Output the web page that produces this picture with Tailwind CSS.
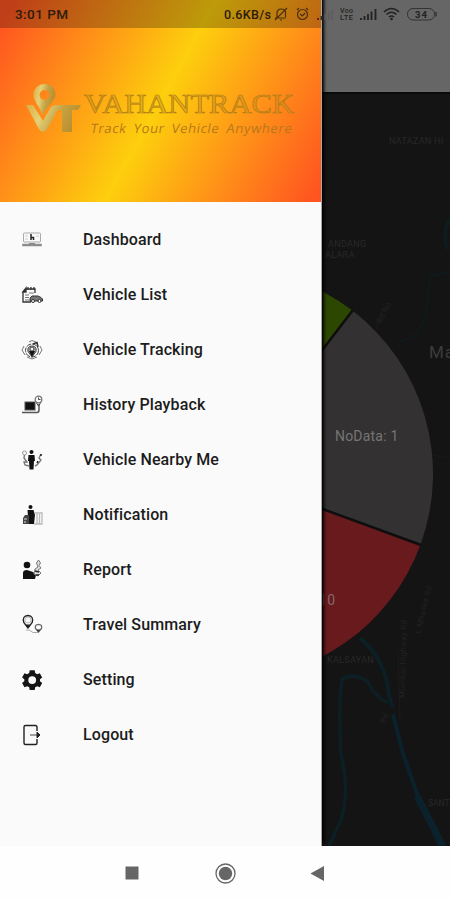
<!DOCTYPE html>
<html lang="en">
<head>
    <meta charset="UTF-8">
    <meta name="viewport" content="width=device-width, initial-scale=1.0">
    <title>VahanTrack</title>
    <script src="https://cdn.jsdelivr.net/npm/@tailwindcss/browser@4"></script>
</head>
<body class="bg-white font-['Roboto',sans-serif]">
    <div class="relative flex flex-col w-[450px] h-[900px] overflow-hidden">
        <!-- Dimmed map screen -->
        <main class="flex flex-col h-[846px] bg-[#141414]">
            <div class="h-[92px] shrink-0 bg-[#666666]"></div>
            <svg class="block w-[450px] h-[754px]" viewBox="0 92 450 754" fill="none">
                <rect y="92" width="450" height="2" fill="#0a0a0a"/>
                <!-- Rivers -->
                <g stroke="#0c1f24">
                    <path d="M450 219Q441 235 448 249" stroke-width="4" stroke="#0e1c1f"/>
                    <path d="M450 272L430 276L426 316Q420 336 400 342" stroke-width="2" stroke="#101a1c"/>
                    <path d="M360 638Q386 660 389 695L393 708" stroke-width="4"/>
                    <path d="M393 714L403 754L418 796L440 846" stroke-width="4" stroke="#0b212b"/>
                    <path d="M417 796L443 846" stroke-width="7" stroke="#0b212b"/>
                    <path d="M388 703Q374 696 368 682Q354 672 342 679Q338 710 341 755Q350 790 341 820L329 846" stroke-width="3.500"/>
                </g>
                <path d="M425 454L450 458M400 720L398 650M384 303L376 330" stroke="#1b1b1b"/>
                <!-- Place labels -->
                <g fill="#282828" font-size="9" letter-spacing=".3">
                    <text x="389" y="144">NATAZAN HI</text>
                    <text x="328" y="247">ANDANG</text>
                    <text x="325" y="258">ALARA</text>
                    <text x="327" y="663">KALSAYAN</text>
                    <text x="428" y="806" font-size="8.500" letter-spacing="0">SANT</text>
                    <g fill="#222">
                        <text x="405" y="698" font-size="8" transform="rotate(-89 405 698)">Mumbai Highway Rd</text>
                        <text x="420" y="634" font-size="8" transform="rotate(-76 420 634)">L Mhaske Rd</text>
                        <text x="384" y="724" font-size="8" transform="rotate(-60 384 724)">Rd</text>
                        <text x="381" y="324" font-size="8" transform="rotate(-62 381 324)">Rd No</text>
                    </g>
                </g>
                <text x="429" y="358" font-size="17" letter-spacing="1" fill="#3c3c3c">Ma</text>
                <!-- Status pie -->
                <path d="M227 474V268A206 206 0 0 1 352.500 310.600Z" fill="#2c4700"/>
                <path d="M227 474L352.500 310.600A206 206 0 0 1 420.500 544.700Z" fill="#333132"/>
                <path d="M227 474L420.500 544.700A206 206 0 0 1 227 680Z" fill="#691a1d"/>
                <path d="M353 310L227 474L421 545" stroke="#0e0e0e" stroke-width="2.500"/>
                <text x="335" y="441" font-size="14" letter-spacing=".2" fill="#757575">NoData: 1</text>
                <text x="319" y="605" font-size="14" letter-spacing=".5" fill="#85696a">10</text>
            </svg>
        </main>

        <!-- Drawer -->
        <aside class="absolute left-0 top-0 flex flex-col w-[322px] h-[846px] bg-[#fafafa] border-r border-[#a8a8a8] shadow-[2px_-3px_3px_#000]">
            <header class="h-[202px] shrink-0 bg-[linear-gradient(119deg,#ff5420_3%,#ff8c19_24%,#fdcf0d_50%,#ff8c19_76%,#ff5420_98%)]">
                <svg class="block w-[321px] h-[202px]" viewBox="0 0 321 202">
                    <defs>
                        <linearGradient id="gold" x1="0" y1="0" x2="1" y2=".25">
                            <stop offset="0" stop-color="#dcae3c"/>
                            <stop offset=".35" stop-color="#e5d078"/>
                            <stop offset=".65" stop-color="#c5a343"/>
                            <stop offset="1" stop-color="#bb8f2d"/>
                        </linearGradient>
                    </defs>
                    <path fill="url(#gold)" fill-rule="evenodd" d="M44.500 84C38 84 33.500 89 33.500 95C33.500 101 40 107 42.500 115C46 107 55.500 101 55.500 94.500C55.500 88 51 84 44.500 84ZM44.500 90A5 5 0 1 1 44.500 100A5 5 0 1 1 44.500 90Z"/>
                    <path fill="url(#gold)" d="M26 105H33L43 121L51 107Q53 105 57 105H81L78 110H72V132H62V110H58L47 129Q43 135 39 129Z"/>
                    <text x="84" y="112.500" font-family="Liberation Serif" font-size="27" textLength="210" lengthAdjust="spacingAndGlyphs" fill="#c9921c" fill-opacity=".45" stroke="#b07c18" stroke-width=".7">VAHANTRACK</text>
                    <text transform="translate(90 133) skewX(-10)" font-family="Open Sans, sans-serif" font-size="13" textLength="201" lengthAdjust="spacing" word-spacing="3" fill="#b5781a">Track Your Vehicle Anywhere</text>
                </svg>
            </header>
            <nav class="flex flex-col pt-[10px] text-[16px] font-medium text-[#1c1c1c]">
                <a class="flex items-center h-[55px] pl-[21px] gap-[40px]">
                    <svg class="w-[22px] h-[22px]" viewBox="0 0 22 22" fill="none">
                        <rect x="2.500" y="4" width="17" height="9" rx="1" stroke="#aaa"/>
                        <path d="M10 5V11M10 8.500H12.500V11" stroke="#222" stroke-width="1.500"/>
                        <path d="M4 7H7M15 7H18M4 10H7" stroke="#ccc"/>
                        <path d="M1 14.500H21V17.500H1Z" fill="#c4c4c4"/><path d="M1.500 16H20.500" stroke="#555"/><path d="M8 14.500H14" stroke="#888"/>
                    </svg>
                    <span class="tracking-[0.12px]">Dashboard</span>
                </a>
                <a class="flex items-center h-[55px] pl-[21px] gap-[40px]">
                    <svg class="w-[22px] h-[22px]" viewBox="0 0 22 22" fill="none" stroke="#333">
                        <path d="M14 9V5H5L2 8V18H10" stroke-width="1.300"/>
                        <path d="M2 8L5 4V8ZM7 3V6M10 3V6M13 3V6" fill="#222" stroke-width="1.300"/>
                        <path d="M4 11H8M4 13.500H8M4 16H8M8 9H13" stroke="#777"/>
                        <path d="M9 16V14L11 12H17L20 13.500L21.500 15V17H9Z" fill="#777"/>
                        <circle cx="12" cy="17" r="1.500" fill="#fff"/><circle cx="18.500" cy="17" r="1.500" fill="#fff"/>
                    </svg>
                    <span class="tracking-[0.12px]">Vehicle List</span>
                </a>
                <a class="flex items-center h-[55px] pl-[21px] gap-[40px]">
                    <svg class="w-[22px] h-[22px]" viewBox="0 0 22 22" fill="none" stroke="#444">
                        <circle cx="11" cy="11.500" r="6.500" stroke-dasharray="5 1"/>
                        <path d="M3 7L1 11L4 16M19 7L21 11L18 16M6 18L11 20L16 18M8 3L11 1.500L15 3" stroke="#777"/>
                        <path d="M11 18L7 12.500Q6 7 11 7Q16 7 15 12.500Z" fill="#aaa"/>
                        <path d="M8 12H14L11 18Z" fill="#111" stroke="none"/>
                        <circle cx="11" cy="10" r="2" fill="#eee"/>
                        <path d="M12 5L16 3.500L17 8" stroke="#333" stroke-width="1.500"/>
                    </svg>
                    <span class="tracking-[0.12px]">Vehicle Tracking</span>
                </a>
                <a class="flex items-center h-[55px] pl-[21px] gap-[40px]">
                    <svg class="w-[22px] h-[22px]" viewBox="0 0 22 22" fill="none">
                        <rect x="4" y="8" width="10" height="8" fill="#111" stroke="#555"/>
                        <path d="M1 18.500H16Q18 18.500 18 16V10" stroke="#555" stroke-width="1.500"/>
                        <circle cx="17.500" cy="5.500" r="3.300" stroke="#777" stroke-width="1.300"/>
                        <path d="M17.500 3.500V5.500H19.500M15.500 9L17.500 12L19.500 9" stroke="#444"/>
                    </svg>
                    <span class="tracking-[0.12px]">History Playback</span>
                </a>
                <a class="flex items-center h-[55px] pl-[21px] gap-[40px]">
                    <svg class="w-[22px] h-[22px]" viewBox="0 0 22 22" fill="none">
                        <circle cx="10.500" cy="3" r="2" fill="#111"/>
                        <path d="M7.500 6H13.500L14 12H13L12.500 20.500H8.500L8 12H7Z" fill="#111"/>
                        <circle cx="3.500" cy="4" r="2" stroke="#999"/>
                        <path d="M3.500 6L3 9L6 13H3L4 16L8 17M20 5L18 9L20 11L16 16L14 17" stroke="#777" stroke-width="1.400"/>
                        <path d="M20 5V7M17 12L16 14" stroke="#222" stroke-width="1.500"/>
                    </svg>
                    <span class="tracking-[0.12px]">Vehicle Nearby Me</span>
                </a>
                <a class="flex items-center h-[55px] pl-[21px] gap-[40px]">
                    <svg class="w-[22px] h-[22px]" viewBox="0 0 22 22" fill="none">
                        <circle cx="9.500" cy="3" r="2" fill="#111"/>
                        <path d="M6.500 6H12.500L14 11L13 20H7V13Z" fill="#111"/>
                        <path d="M2 20V14L4 11H8V20Z" fill="#444"/>
                        <path d="M3 15H6M3 18H5" stroke="#ddd"/>
                        <path d="M14 9H21V20H13M16 10V20M18.500 10V20" stroke="#bbb" stroke-width="1.300"/>
                    </svg>
                    <span class="tracking-[0.12px]">Notification</span>
                </a>
                <a class="flex items-center h-[55px] pl-[21px] gap-[40px]">
                    <svg class="w-[22px] h-[22px]" viewBox="0 0 22 22" fill="none">
                        <circle cx="6" cy="6" r="3.300" fill="#111"/>
                        <path d="M2 20V14Q2 11 6 11L12 13L15 16L14 20Z" fill="#111"/>
                        <path d="M17.500 1L19.500 4L18 6.500L20 9L17 11L20 14L17 17L13 15L14 10L17 8L15.500 4Z" fill="#ddd" stroke="#777"/>
                        <path d="M14 12L18 13M15 16H18" stroke="#222" stroke-width="1.300"/>
                    </svg>
                    <span class="tracking-[0.12px]">Report</span>
                </a>
                <a class="flex items-center h-[55px] pl-[21px] gap-[40px]">
                    <svg class="w-[22px] h-[22px]" viewBox="0 0 22 22" fill="none" stroke="#222">
                        <path d="M7 14L2.800 8.500Q0.800 2 7 1.500Q13 2 11.200 8.500Z" stroke-width="1.300"/>
                        <path d="M5 11H9L7 14Z" fill="#222"/>
                        <circle cx="7" cy="6" r="3" stroke="#bbb"/>
                        <path d="M17.500 18L14.500 14.500Q13.500 10.500 17.500 10.300Q21.500 10.500 20.500 14.500Z" stroke="#666" stroke-width="1.300"/>
                        <path d="M15.500 15.500H19.500L17.500 18Z" fill="#333" stroke="none"/>
                        <path d="M5 16H8L12 18.500H17" stroke="#aaa"/>
                    </svg>
                    <span class="tracking-[0.12px]">Travel Summary</span>
                </a>
                <a class="flex items-center h-[55px] pl-[21px] gap-[40px]">
                    <svg class="w-[22px] h-[22px]" viewBox="0 0 22 22" fill="#151515">
                        <path fill-rule="evenodd" d="M8.700 1.200H13.700L14.200 4L16.200 5.200L18.800 4.200L21.200 8.500L19 10.200V12.200L21.200 14L18.800 18.200L16.200 17.200L14.200 18.300L13.700 21H8.700L8.200 18.300L6.200 17.200L3.500 18.200L1.100 14L3.300 12.200V10.200L1.100 8.500L3.500 4.200L6.200 5.200L8.200 4ZM11.200 7.200A3.900 3.900 0 1 0 11.200 15A3.900 3.900 0 1 0 11.200 7.200Z"/>
                    </svg>
                    <span class="tracking-[0.12px]">Setting</span>
                </a>
                <a class="flex items-center h-[55px] pl-[21px] gap-[40px]">
                    <svg class="w-[22px] h-[22px]" viewBox="0 0 22 22" fill="none" stroke="#222" stroke-width="1.400">
                        <path d="M16 7V3Q16 1.500 14.500 1.500H4.500Q3 1.500 3 3V19Q3 20.500 4.500 20.500H14.500Q16 20.500 16 19V15"/>
                        <path d="M9 11H17" stroke="#777"/>
                        <path d="M16 8L19 11L16 14Z" fill="#222" stroke-width="1"/>
                    </svg>
                    <span class="tracking-[0.12px]">Logout</span>
                </a>
            </nav>
        </aside>

        <!-- Status bar -->
        <div class="absolute left-0 top-0 flex w-[450px] h-[28px]">
            <div class="w-[321px] h-[28px] bg-black/25"></div>
            <svg class="absolute left-0 top-0 w-[450px] h-[28px]" viewBox="0 0 450 28" fill="none">
                <g fill="#2d1b0c" font-weight="500">
                    <text x="15" y="19" font-size="13.500" textLength="53">3:01 PM</text>
                    <text x="224" y="18.500" font-size="12.500" textLength="47">0.6KB/s</text>
                </g>
                <!-- Mute and alarm -->
                <g stroke="#4a3010" stroke-width="1.200">
                    <path d="M275 18H286M277 18V12Q278 9 281 9Q285 9 285.500 12V17M275 20L287 8M280 20H282"/>
                    <circle cx="302.500" cy="14.500" r="5"/>
                    <path d="M297 10L299 8M308 10L306 8M300 14L302.500 16L305 13"/>
                </g>
                <path d="M317 20V18H319V20Z" fill="#6b200a"/>
                <path d="M320.500 20V16H322.500V20Z" fill="#333"/>
                <path d="M325 20V14M329 20V12M332 20V10" stroke="#5c5c5c" stroke-width="1.500"/>
                <g fill="#252525" font-weight="500">
                    <text x="340" y="12.500" font-size="7" textLength="13">Voo</text>
                    <text x="340" y="20" font-size="7.500" textLength="13">LTE</text>
                </g>
                <path d="M361 20V18M364.500 20V16M368 20V14M371.500 20V11.500M375.500 20V9" stroke="#222" stroke-width="1.800"/>
                <path d="M384 12Q391.500 5 399 12M386.500 14.500Q391.500 10 396.500 14.500M389 17Q391.500 15 394 17" stroke="#222" stroke-width="1.600"/>
                <circle cx="391.500" cy="19" r="1.300" fill="#222"/>
                <rect x="407.500" y="8.500" width="27" height="11.500" rx="5.500" stroke="#333"/>
                <path d="M436 12V16.500" stroke="#333" stroke-width="1.500"/>
                <text x="415" y="17.500" font-size="9.500" font-weight="700" fill="#222" textLength="12">34</text>
            </svg>
        </div>

        <!-- Navigation bar -->
        <footer class="relative h-[54px] bg-[#fefefe]">
            <svg class="block w-[450px] h-[54px]" viewBox="0 846 450 54" fill="#666">
                <rect x="125.500" y="866.500" width="13" height="13"/>
                <circle cx="225.500" cy="873.500" r="9.500" fill="none" stroke="#666" stroke-width="1.300"/>
                <circle cx="225.500" cy="873.500" r="6.700"/>
                <path d="M310.500 873.500L324 866V881Z"/>
            </svg>
        </footer>
    </div>
</body>
</html>
